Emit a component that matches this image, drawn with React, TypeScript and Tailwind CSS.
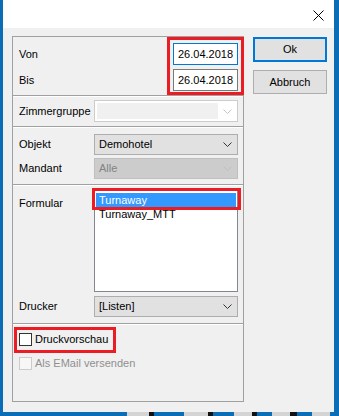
import React from 'react';

const font = { fontFamily: '"Liberation Sans", Arial, sans-serif' };

// Pfeil für Auswahlfelder
function Chevron({ color }: { color: string }) {
  return (
    <svg width="9" height="5" viewBox="0 0 9 5" className="shrink-0">
      <polyline points="0.5,0.5 4.5,4.5 8.5,0.5" fill="none" stroke={color} strokeWidth="1" />
    </svg>
  );
}

function Combo({ text, disabled = false }: { text: string; disabled?: boolean }) {
  return (
    <div
      className={`w-[144px] h-[21px] border flex items-center justify-between pl-[4px] pr-[5px] ${
        disabled ? 'bg-[#cccccc] border-[#bfbfbf] text-[#838383]' : 'bg-[#e1e1e1] border-[#adadad] text-black'
      }`}
    >
      <span>{text}</span>
      <Chevron color={disabled ? '#bfbfbf' : '#333333'} />
    </div>
  );
}

function Label({ text, className = '' }: { text: string; className?: string }) {
  return <div className={`w-[81px] shrink-0 pl-[6px] ${className}`}>{text}</div>;
}

function DateField({ value, focused = false }: { value: string; focused?: boolean }) {
  return (
    <div
      className={`w-[65px] h-[22px] mr-[5px] bg-white border flex items-center pl-[4px] ${
        focused ? 'border-[#0078d7]' : 'border-[#7a7a7a]'
      }`}
    >
      {value}
    </div>
  );
}

// Markierung (rote Rahmen im Screenshot)
function Mark({ className }: { className: string }) {
  return <div className={`absolute border-[3px] border-[#ec1c24] pointer-events-none ${className}`} />;
}

const taskbar: [number, string][] = [
  [127, '#0b6db5'], [22, '#d4d4d4'], [5, '#111111'], [30, '#0b6db5'], [24, '#d4d4d4'], [5, '#111111'],
  [21, '#0b6db5'], [18, '#d4d4d4'], [5, '#111111'], [15, '#0b6db5'], [18, '#d4d4d4'], [7, '#111111'],
  [15, '#0b6db5'], [18, '#d4d4d4'], [9, '#0b6db5'],
];

export default function App() {
  return (
    <div className="w-[339px] h-[416px] bg-[#0b6db5] flex flex-col text-[11px] text-black" style={font}>
      <div className="flex-1 flex flex-col ml-[3px] mr-[5px]">
        {/* Titelleiste */}
        <div className="h-[28px] bg-white flex justify-end items-start pt-[10px] pr-[10px]">
          <svg width="11" height="11" viewBox="0 0 11 11">
            <path d="M0.5 0.5 L10.5 10.5 M10.5 0.5 L0.5 10.5" stroke="#000" strokeWidth="1" />
          </svg>
        </div>

        {/* Inhalt */}
        <div className="flex-1 bg-[#f0f0f0] flex pt-[8px] pl-[9px]">
          <div className="relative w-[232px] h-[366px] border border-[#a0a0a0] flex flex-col">
            {/* Zeitraum */}
            <div className="h-[59px] border-b border-[#a0a0a0] shadow-[0_1px_0_#ffffff] flex flex-col pt-[6px] gap-[4px]">
              <div className="h-[22px] flex items-center justify-between">
                <Label text="Von" />
                <DateField value="26.04.2018" focused />
              </div>
              <div className="h-[22px] flex items-center justify-between">
                <Label text="Bis" />
                <DateField value="26.04.2018" />
              </div>
            </div>

            {/* Zimmergruppe */}
            <div className="h-[31px] border-b border-[#a0a0a0] shadow-[0_1px_0_#ffffff] pt-[4px]">
              <div className="h-[22px] flex items-center">
                <Label text="Zimmergruppe" />
                <div className="w-[144px] h-[22px] border border-[#cccccc] bg-white flex items-center justify-between pl-[2px] pr-[5px]">
                  <div className="w-[121px] h-[16px] bg-[#f0f0f0]" />
                  <Chevron color="#c4c4c4" />
                </div>
              </div>
            </div>

            {/* Objekt / Mandant */}
            <div className="h-[58px] border-b border-[#a0a0a0] shadow-[0_1px_0_#ffffff] flex flex-col pt-[7px] gap-[3px]">
              <div className="h-[21px] flex items-center">
                <Label text="Objekt" />
                <Combo text="Demohotel" />
              </div>
              <div className="h-[21px] flex items-center">
                <Label text="Mandant" />
                <Combo text="Alle" disabled />
              </div>
            </div>

            {/* Formular / Drucker */}
            <div className="h-[139px] border-b border-[#a0a0a0] shadow-[0_1px_0_#ffffff] flex flex-col pt-[5px] gap-[4px]">
              <div className="flex items-start">
                <Label text="Formular" className="pt-[5px]" />
                <div className="w-[144px] h-[102px] border border-[#828790] bg-white p-[1px] flex flex-col">
                  <div className="h-[14px] bg-[#3399ff] text-white pl-[3px] flex items-center mt-[1px]">Turnaway</div>
                  <div className="h-[14px] pl-[3px] flex items-center">Turnaway_MTT</div>
                </div>
              </div>
              <div className="h-[21px] flex items-center">
                <Label text="Drucker" />
                <Combo text="[Listen]" />
              </div>
            </div>

            {/* Optionen */}
            <div className="flex-1 flex flex-col pt-[9px] pl-[6px] gap-[11px]">
              <div className="h-[13px] flex items-center gap-[3px]">
                <div className="w-[13px] h-[13px] border border-[#333333] bg-white" />
                <span>Druckvorschau</span>
              </div>
              <div className="h-[13px] flex items-center gap-[3px] text-[#8f8f8f]">
                <div className="w-[13px] h-[13px] border border-[#cccccc] bg-[#f7f7f7]" />
                <span>Als EMail versenden</span>
              </div>
            </div>

            <Mark className="left-[154px] top-0 w-[77px] h-[58px]" />
            <Mark className="left-[79px] top-[151px] w-[149px] h-[22px]" />
            <Mark className="left-[1px] top-[290px] w-[102px] h-[26px]" />
          </div>

          {/* Schaltflächen */}
          <div className="ml-[9px] pt-[1px] flex flex-col gap-[8px]">
            <div className="w-[74px] h-[25px] border-2 border-[#0078d7] bg-[#e1e1e1] flex items-center justify-center">Ok</div>
            <div className="w-[74px] h-[24px] border border-[#adadad] bg-[#e1e1e1] flex items-center justify-center">Abbruch</div>
          </div>
        </div>
      </div>

      {/* Taskleiste unten */}
      <div className="h-[4px] flex">
        {taskbar.map(([w, c], i) => (
          <div key={i} className="h-full" style={{ width: w, backgroundColor: c }} />
        ))}
      </div>
    </div>
  );
}
